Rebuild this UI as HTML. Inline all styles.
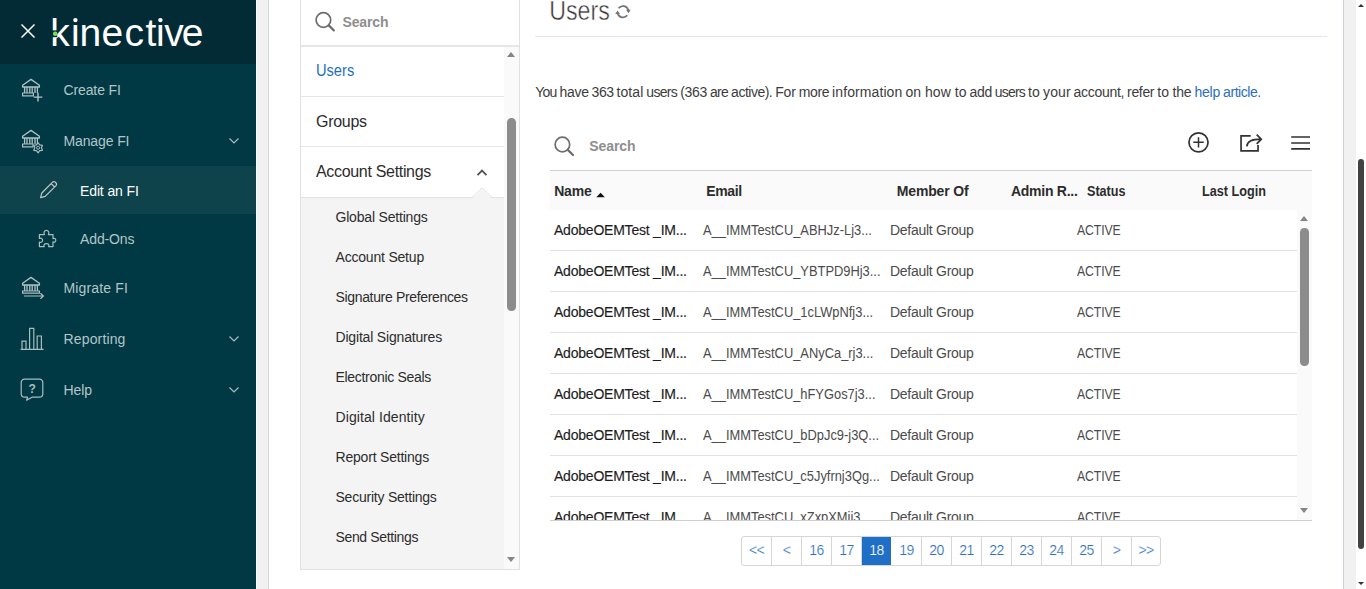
<!DOCTYPE html>
<html lang="en">
<head>
<meta charset="utf-8">
<title>Users</title>
<style>
*{box-sizing:border-box;margin:0;padding:0}
html,body{width:1366px;height:589px;overflow:hidden;background:#f1f1f1;font-family:"Liberation Sans",sans-serif;color:#2c2c2c}
.abs{position:absolute}
#side{position:absolute;left:0;top:0;width:256px;height:589px;background:#003943}
#side .hd{position:absolute;left:0;top:0;width:256px;height:64px;background:#022b36}
#side .it{position:absolute;left:0;width:256px;height:48px;color:#b4c5c9;font-size:14px;line-height:48px;letter-spacing:-0.12px}
#side .it span{position:absolute;left:63.500px;top:0;white-space:nowrap}
#side .it.sub span{left:80px}
#side .it.on{background:#0f434c;color:#fff}
#side svg{position:absolute;overflow:visible}
#card{position:absolute;left:268px;top:0;width:1076px;height:589px;background:#fff;border-left:1px solid #d6d6da;border-right:1px solid #d0d0d6}
#nav{position:absolute;left:300px;top:-1px;width:220px;height:571px;border:1px solid #e1e1e1;background:#fff}
#nav .sr{position:absolute;left:0;top:0;width:218px;height:47px;border-bottom:2px solid #e6e6e6}
#nav .row{position:absolute;left:0;width:203px;border-bottom:1px solid #e6e6e6;font-size:16px;color:#2c2c2c}
#nav .row span{position:absolute;left:15px;line-height:20px;white-space:nowrap}
#nav .subs{position:absolute;left:0;top:197px;width:203px;height:372px;background:#f4f4f4;border-top:1px solid #e3e3e3}
#nav .s{position:absolute;left:34.500px;font-size:14px;line-height:20px;color:#2c2c2c;white-space:nowrap}
.sb{position:absolute;background:#fafafa}
.th{position:absolute;background:#8c8c8c;border-radius:4.300px}
.tri-u{position:absolute;width:0;height:0;border-left:4.5px solid transparent;border-right:4.5px solid transparent;border-bottom:5px solid #858585}
.tri-d{position:absolute;width:0;height:0;border-left:4.5px solid transparent;border-right:4.5px solid transparent;border-top:5px solid #858585}
#main{position:absolute;left:0;top:0;width:1366px;height:589px}
.hr{position:absolute;left:535px;top:36px;width:792px;height:1px;background:#e6e6e6}
.p{position:absolute;left:535px;top:82px;width:740px;height:20px;font-size:14px;line-height:20px;color:#3c3c3c;white-space:nowrap;letter-spacing:-0.400px}
.p span{position:absolute;top:0}
.p a{color:#2a6ebb;text-decoration:none}
.ph{position:absolute;font-weight:bold;color:#8e8e8e;font-size:14px;letter-spacing:-0.150px}
#tbl{position:absolute;left:550px;top:170px;width:762px;height:351px;border-top:1px solid #cfcfcf;border-bottom:1px solid #cfcfcf;overflow:hidden}
#tbl .head{position:absolute;left:0;top:0;width:762px;height:39px;background:#fafafa}
#tbl .head b{position:absolute;top:10px;font-size:14px;line-height:20px;color:#2c2c2c;white-space:nowrap}
#tbl .r{position:absolute;left:0;width:747px;height:41px;border-bottom:1px solid #e1e1e1;background:#fff}
#tbl .r span{position:absolute;top:10px;font-size:14px;line-height:20px;white-space:nowrap}
#tbl .r .n{left:4px;color:#1c1c1c;letter-spacing:-0.220px;-webkit-text-stroke:0.150px #1c1c1c}
#tbl .r .e{left:153.300px;color:#4b4b4b;transform:scaleX(0.920);transform-origin:0 50%}
#tbl .r .g{left:340px;color:#4b4b4b;letter-spacing:-0.275px}
#tbl .r .a{left:527.300px;color:#4b4b4b;letter-spacing:-0.100px;transform:scaleX(0.872);transform-origin:0 50%}
#pg{position:absolute;left:741px;top:536px;height:30px;width:420px;border:1px solid #d6d6d6;border-radius:3px;background:#fff;overflow:hidden}
#pg i{position:absolute;top:0;width:30px;height:28px;border-right:1px solid #d6d6d6;font-style:normal;text-align:center;font-size:14px;line-height:27px;color:#2a6fc4;letter-spacing:-0.600px;-webkit-text-stroke:0.200px #fff}
#pg i.on{background:#1f6fc6;color:#fff;border-right-color:#fff;-webkit-text-stroke:0.200px #1f6fc6}
</style>
</head>
<body>
<div class="abs" style="left:256px;top:0;width:1px;height:589px;background:#fbfbfb"></div>
<div id="card"></div>

<div id="side">
  <div class="hd">
    <svg width="16" height="16" style="left:20px;top:23px" viewBox="0 0 16 16"><path d="M1.5 1.5L14.5 14.5M14.5 1.5L1.5 14.5" stroke="#fff" stroke-width="1.5" fill="none"/></svg>
    <svg width="170" height="50" style="left:40px;top:8px" viewBox="40 8 170 50">
      <text y="46" x="50.300 71 79.600 101.400 124.600 145.500 156 164.200 181.800" font-family="Liberation Sans, sans-serif" font-size="39" fill="#fff">kinective</text>
      <rect x="52" y="30.400" width="5.200" height="6.800" fill="#022b36"/>
      <rect x="72.500" y="15" width="6" height="8.600" fill="#022b36"/><rect x="157.500" y="15" width="6" height="8.600" fill="#022b36"/>
      <circle cx="75.400" cy="20.100" r="2.200" fill="#fff"/><circle cx="160.400" cy="20.100" r="2.200" fill="#fff"/>
      <circle cx="55.200" cy="33.700" r="2.300" fill="#7ddc54"/>
    </svg>
  </div>
  <div class="it" style="top:66px"><span>Create FI</span>
    <svg width="24" height="24" style="left:22px;top:12px" viewBox="0 0 24 24"><g fill="none" stroke="#b0c2c6" stroke-width="1.300" stroke-linejoin="round">
      <path d="M0.6 7.2L9 1.4L17.4 7.2V9H0.6Z"/>
      <path d="M2.6 9V15M5 9V15M7.8 9V15M10.2 9V15M13 9V15M15.4 9V15"/>
    </g><path d="M0.6 15H11.400V17.800H0.6Z" fill="none" stroke="#a9bcc0" stroke-width="1.2"/><path d="M16 14.800V23.400 M11.700 19.100H20.300" fill="none" stroke="#b4c5c9" stroke-width="1.4"/></svg>
  </div>
  <div class="it" style="top:117px"><span>Manage FI</span>
    <svg width="24" height="24" style="left:22px;top:12px" viewBox="0 0 24 24"><g fill="none" stroke="#b0c2c6" stroke-width="1.300" stroke-linejoin="round">
      <path d="M0.6 7.2L9 1.4L17.4 7.2V9H0.6Z"/>
      <path d="M2.6 9V15M5 9V15M7.8 9V15M10.2 9V15M13 9V15M15.4 9V15"/>
    </g><path d="M0.6 15H11V17.8H0.6Z" fill="none" stroke="#a9bcc0" stroke-width="1.2"/><path d="M16.100 13.800L17.750 15.942L20.430 16.300L19.400 18.800L20.430 21.300L17.750 21.658L16.100 23.800L14.450 21.658L11.770 21.300L12.800 18.800L11.770 16.300L14.450 15.942Z" fill="#003943" stroke="#a9bcc0" stroke-width="1.200" stroke-linejoin="round"/><circle cx="16.100" cy="18.800" r="1.500" fill="none" stroke="#a9bcc0" stroke-width="1"/>
    <path d="M207.500 9.500L212 14L216.500 9.500" fill="none" stroke="#a9bcc0" stroke-width="1.2"/></svg>
  </div>
  <div class="it sub on" style="top:166px"><span style="top:1px">Edit an FI</span>
    <svg width="20" height="20" style="left:39px;top:14px" viewBox="0 0 20 20"><path d="M1.6 17.6L2.8 13L13.6 2.2a1.8 1.8 0 0 1 2.6 0l0.8 0.8a1.8 1.8 0 0 1 0 2.600L6.200 16.400Z M12.200 3.600L15.600 7" fill="none" stroke="#bccbce" stroke-width="1.2" stroke-linejoin="round"/></svg>
  </div>
  <div class="it sub" style="top:215px"><span>Add-Ons</span>
    <svg width="20" height="20" style="left:38px;top:14px" viewBox="0 0 20 20"><path d="M1.400 5.600H6.400C5.400 3.600 6.200 1.400 8.400 1.400C10.600 1.400 11.400 3.600 10.400 5.600H15V9.600C16.600 8.800 17.800 9.600 17.800 11.200C17.800 12.800 16.600 13.600 15 12.800V17.600H10.600C11.400 15.800 10.400 14.600 8.400 14.600C6.400 14.600 5.400 15.800 6.200 17.600H1.400V13C3.200 13.800 4.600 12.800 4.600 11.200C4.600 9.600 3.200 8.600 1.400 9.400Z" fill="none" stroke="#a9bcc0" stroke-width="1.200" stroke-linejoin="round"/></svg>
  </div>
  <div class="it" style="top:264px"><span style="letter-spacing:0.150px">Migrate FI</span>
    <svg width="24" height="24" style="left:22px;top:12px" viewBox="0 0 24 24"><g fill="none" stroke="#b0c2c6" stroke-width="1.300" stroke-linejoin="round">
      <path d="M0.6 7.2L9 1.4L17.4 7.2V9H0.6Z"/>
      <path d="M2.6 9V15M5 9V15M7.8 9V15M10.2 9V15M13 9V15M15.4 9V15"/>
    </g><path d="M0.6 15H17.400V17.200H0.6Z M2 20H21.400M18.400 17.200L21.400 20L18.400 22.800" fill="none" stroke="#a9bcc0" stroke-width="1.2"/></svg>
  </div>
  <div class="it" style="top:315px"><span style="letter-spacing:0.150px">Reporting</span>
    <svg width="24" height="24" style="left:20px;top:12px" viewBox="0 0 24 24"><path d="M2 22V14.200H6V22M9.600 22V1.400H13.800V22M17.200 22V9H21.400V22M0.600 22.400H23.600" fill="none" stroke="#a9bcc0" stroke-width="1.2"/>
    <path d="M209.500 9.500L214 14L218.500 9.500" fill="none" stroke="#a9bcc0" stroke-width="1.2"/></svg>
  </div>
  <div class="it" style="top:366px"><span>Help</span>
    <svg width="24" height="24" style="left:20px;top:12px" viewBox="0 0 24 24"><path d="M4.600 1.200H19.400a3.400 3.400 0 0 1 3.400 3.400V15.800a3.400 3.400 0 0 1 -3.400 3.400H12L6.600 22.200L7.600 19.200H4.600a3.400 3.400 0 0 1 -3.400 -3.400V4.600a3.400 3.400 0 0 1 3.400 -3.400Z" fill="none" stroke="#a9bcc0" stroke-width="1.2" stroke-linejoin="round"/>
    <text x="12" y="14.600" text-anchor="middle" font-family="Liberation Sans, sans-serif" font-size="12" font-weight="bold" fill="#a9bcc0">?</text>
    <path d="M209.500 9.500L214 14L218.500 9.500" fill="none" stroke="#a9bcc0" stroke-width="1.2"/></svg>
  </div>
</div>

<div id="nav">
  <div class="sr">
    <svg class="abs" width="36" height="36" style="left:0;top:0" viewBox="0 0 36 36"><circle cx="22.400" cy="20" r="7.300" fill="none" stroke="#6e6e6e" stroke-width="1.700"/><path d="M27.800 25.400L32.800 30.400" stroke="#6e6e6e" stroke-width="2.200" stroke-linecap="round"/></svg>
    <div class="ph" style="left:41.500px;top:13px;line-height:18px">Search</div>
  </div>
  <div class="row" style="top:47px;height:50px"><span style="top:13.500px;color:#1d6fc4;transform:scaleX(0.914);transform-origin:0 50%">Users</span></div>
  <div class="row" style="top:97px;height:50px"><span style="top:15px;letter-spacing:-0.280px">Groups</span></div>
  <div class="row" style="top:147px;height:50px;border-bottom:0"><span style="top:15px;letter-spacing:-0.320px">Account Settings</span></div>
  <div class="subs"></div>
  <svg class="abs" width="30" height="14" style="left:166px;top:185px" viewBox="467 185 30 14"><path d="M467 197.500H471.800L482 188L492.200 197.500H497" fill="none" stroke="#e3e3e3" stroke-width="1"/><path d="M472.500 198L482 189.200L491.500 198Z" fill="#f4f4f4"/></svg>
  <svg class="abs" width="16" height="12" style="left:173px;top:166px" viewBox="474 166 16 12"><path d="M477.500 175.200L482 170.700L486.500 175.200" fill="none" stroke="#555" stroke-width="1.900"/></svg>
  <div class="s" style="top:207px;letter-spacing:-0.190px">Global Settings</div>
  <div class="s" style="top:247px;letter-spacing:-0.200px">Account Setup</div>
  <div class="s" style="top:287px;letter-spacing:-0.340px">Signature Preferences</div>
  <div class="s" style="top:327px;letter-spacing:-0.180px">Digital Signatures</div>
  <div class="s" style="top:367px;letter-spacing:-0.310px">Electronic Seals</div>
  <div class="s" style="top:407px;letter-spacing:0.090px">Digital Identity</div>
  <div class="s" style="top:447px;letter-spacing:-0.200px">Report Settings</div>
  <div class="s" style="top:487px;letter-spacing:-0.230px">Security Settings</div>
  <div class="s" style="top:527px;letter-spacing:-0.350px">Send Settings</div>
  <div class="sb" style="left:203px;top:47px;width:15px;height:522px"></div>
  <div class="tri-u" style="left:206.200px;top:52px"></div>
  <div class="th" style="left:206.300px;top:118px;width:8.600px;height:193px"></div>
  <div class="tri-d" style="left:206.200px;top:557px"></div>
</div>

<div id="main">
  <svg class="abs" width="100" height="36" style="left:540px;top:0" viewBox="540 0 100 36">
    <text x="549.300" y="19.600" font-family="Liberation Sans, sans-serif" font-size="28" fill="#3a3a3a" stroke="#fff" stroke-width="0.500" textLength="60.500" lengthAdjust="spacingAndGlyphs">Users</text>
    <g fill="none" stroke="#757575" stroke-width="1.800"><path d="M618.600 8.300A5.500 5.500 0 0 1 628.300 10.200"/><path d="M627.300 15.300A5.500 5.500 0 0 1 617.700 13.400"/></g>
    <path d="M626 9.700H630.800L628.500 13.200Z M615.200 13.900H620L617.500 10.400Z" fill="#757575"/>
  </svg>
  <div class="hr"></div>
  <div class="p"><span style="left:0.3px;letter-spacing:-0.78px">You</span> <span style="left:24.6px;letter-spacing:-0.34px">have</span> <span style="left:56.6px;letter-spacing:-0.49px">363</span> <span style="left:81.5px;letter-spacing:0.07px">total</span> <span style="left:111.3px;letter-spacing:-0.67px">users</span> <span style="left:145.2px;letter-spacing:-0.31px">(363</span> <span style="left:175.0px;letter-spacing:-0.71px">are</span> <span style="left:196.1px;letter-spacing:-0.50px">active).</span> <span style="left:240.2px;letter-spacing:-0.13px">For</span> <span style="left:263.8px;letter-spacing:-0.40px">more</span> <span style="left:297.1px;letter-spacing:0.09px">information</span> <span style="left:370.4px;letter-spacing:0.10px">on</span> <span style="left:389.9px;letter-spacing:0.10px">how</span> <span style="left:419.7px;letter-spacing:0.10px">to</span> <span style="left:434.6px;letter-spacing:-0.39px">add</span> <span style="left:459.8px;letter-spacing:-0.79px">users</span> <span style="left:493.1px;letter-spacing:0.10px">to</span> <span style="left:508.1px;letter-spacing:0.07px">your</span> <span style="left:538.6px;letter-spacing:-0.30px">account,</span> <span style="left:592.1px;letter-spacing:-0.34px">refer</span> <span style="left:622.2px;letter-spacing:0.10px">to</span> <span style="left:637.5px;letter-spacing:-0.19px">the</span> <a><span style="left:659.4px;letter-spacing:-0.19px">help</span> <span style="left:688.1px;letter-spacing:-0.45px">article.</span></a></div>

  <svg class="abs" width="30" height="30" style="left:550px;top:130px" viewBox="550 130 30 30"><circle cx="562.400" cy="144.500" r="7.300" fill="none" stroke="#6e6e6e" stroke-width="1.700"/><path d="M567.800 149.900L573 155" stroke="#6e6e6e" stroke-width="2.200" stroke-linecap="round"/></svg>
  <div class="ph" style="left:589.300px;top:137px;line-height:18px;letter-spacing:-0.100px">Search</div>

  <svg class="abs" width="130" height="30" style="left:1184px;top:128px" viewBox="1184 128 130 30" fill="none" stroke="#323232" stroke-width="1.700">
    <circle cx="1198.500" cy="142.350" r="9.550"/><path d="M1193.300 142.350H1203.700M1198.500 137.150V147.550" stroke-width="1.500"/>
    <path d="M1250.700 135.850H1241.050V150.850H1258.050V145"/><path d="M1246.800 146.300C1247.300 141.500 1251 139.200 1260.600 139.200M1256.700 134.600L1261.300 139.200L1256.700 143.800"/>
    <path d="M1291.200 137H1310M1291.200 143H1310M1291.200 148.900H1310"/>
  </svg>

  <div id="tbl">
    <div class="head">
      <b style="left:4.200px;letter-spacing:-0.190px">Name</b>
      <svg class="abs" width="10" height="6" style="left:45.500px;top:21px" viewBox="0 0 10 6"><path d="M0.300 5.200L4.600 0.800L8.900 5.200Z" fill="#111"/></svg>
      <b style="left:156.200px;letter-spacing:-0.370px">Email</b>
      <b style="left:346.800px;letter-spacing:-0.160px">Member Of</b>
      <b style="left:461px;letter-spacing:-0.270px">Admin R...</b>
      <b style="left:537.400px;transform:scaleX(0.900);transform-origin:0 50%">Status</b>
      <b style="left:651.800px;transform:scaleX(0.903);transform-origin:0 50%">Last Login</b>
    </div>
    <div class="r" style="top:39px"><span class="n">AdobeOEMTest _IM...</span><span class="e">A__IMMTestCU_ABHJz-Lj3...</span><span class="g">Default Group</span><span class="a">ACTIVE</span></div>
    <div class="r" style="top:80px"><span class="n">AdobeOEMTest _IM...</span><span class="e">A__IMMTestCU_YBTPD9Hj3...</span><span class="g">Default Group</span><span class="a">ACTIVE</span></div>
    <div class="r" style="top:121px"><span class="n">AdobeOEMTest _IM...</span><span class="e">A__IMMTestCU_1cLWpNfj3...</span><span class="g">Default Group</span><span class="a">ACTIVE</span></div>
    <div class="r" style="top:162px"><span class="n">AdobeOEMTest _IM...</span><span class="e">A__IMMTestCU_ANyCa_rj3...</span><span class="g">Default Group</span><span class="a">ACTIVE</span></div>
    <div class="r" style="top:203px"><span class="n">AdobeOEMTest _IM...</span><span class="e">A__IMMTestCU_hFYGos7j3...</span><span class="g">Default Group</span><span class="a">ACTIVE</span></div>
    <div class="r" style="top:244px"><span class="n">AdobeOEMTest _IM...</span><span class="e">A__IMMTestCU_bDpJc9-j3Q...</span><span class="g">Default Group</span><span class="a">ACTIVE</span></div>
    <div class="r" style="top:285px"><span class="n">AdobeOEMTest _IM...</span><span class="e">A__IMMTestCU_c5Jyfrnj3Qg...</span><span class="g">Default Group</span><span class="a">ACTIVE</span></div>
    <div class="r" style="top:326px"><span class="n">AdobeOEMTest _IM...</span><span class="e">A__IMMTestCU_xZxpXMij3...</span><span class="g">Default Group</span><span class="a">ACTIVE</span></div>
    <div class="sb" style="left:747px;top:39px;width:15px;height:311px"></div>
    <div class="tri-u" style="left:750px;top:45px"></div>
    <div class="th" style="left:750.200px;top:57px;width:8.600px;height:138px"></div>
    <div class="tri-d" style="left:750px;top:337px"></div>
  </div>

  <div id="pg">
    <i style="left:0px">&lt;&lt;</i><i style="left:30px">&lt;</i><i style="left:60px">16</i><i style="left:90px">17</i><i class="on" style="left:120px">18</i><i style="left:150px">19</i><i style="left:180px">20</i><i style="left:210px">21</i><i style="left:240px">22</i><i style="left:270px">23</i><i style="left:300px">24</i><i style="left:330px">25</i><i style="left:360px">&gt;</i><i style="left:390px;border-right:0;width:28px">&gt;&gt;</i>
  </div>
</div>

<div class="abs" style="left:1356px;top:0;width:10px;height:589px;background:#fff"></div>
<div class="abs" style="left:1358px;top:159px;width:6px;height:390px;background:#424242;border-radius:3px"></div>
<div class="abs" style="left:1358px;top:4px;width:0;height:0;border-left:3px solid transparent;border-right:3px solid transparent;border-bottom:3px solid #333"></div>
<div class="abs" style="left:1358px;top:582px;width:0;height:0;border-left:3px solid transparent;border-right:3px solid transparent;border-top:3px solid #333"></div>
</body>
</html>
